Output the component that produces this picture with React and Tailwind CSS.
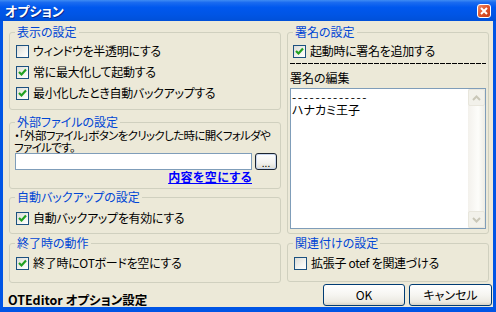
import React from "react";

function CB({ checked }) {
  return (
    <span className="w-[13px] h-[13px] border border-[#1c5180] bg-[linear-gradient(135deg,#dcdcd7_0%,#f4f4f0_60%,#ffffff_100%)] flex items-center justify-center shrink-0">
      {checked && (
        <svg width="11" height="11" viewBox="0 0 11 11">
          <path d="M2 5 L4.5 7.5 L9 2.5" stroke="#21a121" strokeWidth="2.2" fill="none" />
        </svg>
      )}
    </span>
  );
}

function Row({ checked, children, className = "" }) {
  return (
    <div className={"flex items-center gap-[4px] " + className}>
      <CB checked={checked} />
      <span className="leading-[14px] whitespace-nowrap tracking-[-0.3px]">{children}</span>
    </div>
  );
}

function Group({ title, className = "", children }) {
  return (
    <fieldset className={"border border-[#d0d0bf] rounded-[3px] " + className}>
      <legend className="ml-[5px] px-[2px] text-[#0046d5] leading-[14px]">{title}</legend>
      {children}
    </fieldset>
  );
}

function XPButton({ children, className = "" }) {
  return (
    <div
      className={
        "h-[22px] border border-[#003c74] rounded-[3px] bg-[linear-gradient(180deg,#ffffff_0%,#f6f5f1_50%,#ebe9e1_85%,#d8d3c6_100%)] flex items-center justify-center leading-[14px] " +
        className
      }
    >
      {children}
    </div>
  );
}

export default function App() {
  return (
    <div className="w-[496px] h-[312px] bg-[#0055e5] flex flex-col overflow-hidden text-[12px] text-black font-['Noto_Sans_CJK_JP',sans-serif] [font-feature-settings:'palt']">
      {/* title bar */}
      <div className="h-[21px] shrink-0 flex items-center justify-between pl-[5px] pr-[5px] bg-[linear-gradient(180deg,#3f8cf3_0%,#1a6bf0_12%,#0058ee_35%,#0055e5_70%,#0050d8_100%)]">
        <span className="text-white font-bold text-[13px] leading-[16px] pt-[1px] [text-shadow:1px_1px_0_#0a2a8a]">
          オプション
        </span>
        <div className="w-[14px] h-[14px] mt-[1px] rounded-[3px] border border-white bg-[linear-gradient(135deg,#f08a66_0%,#e0542a_50%,#c43c18_100%)] flex items-center justify-center">
          <svg width="8" height="8" viewBox="0 0 8 8">
            <path d="M1 1 L7 7 M7 1 L1 7" stroke="#fff" strokeWidth="2" />
          </svg>
        </div>
      </div>

      {/* body */}
      <div className="flex-1 ml-[3px] mr-[3px] mb-[5px] bg-[#ece9d8] pt-[4px] pl-[6px] pr-[1px] flex gap-[6px]">
        {/* left column */}
        <div className="w-[272px] flex flex-col">
          <Group title="表示の設定" className="h-[85px]">
            <div className="flex flex-col gap-[1px] mt-[2px] pl-[6px]">
              <Row checked={false} className="h-[20px]">ウィンドウを半透明にする</Row>
              <Row checked className="h-[20px]">常に最大化して起動する</Row>
              <Row checked className="h-[20px]">最小化したとき自動バックアップする</Row>
            </div>
          </Group>

          <Group title="外部ファイルの設定" className="h-[74px] mt-[5px]">
            <div className="pl-[4px] text-[11.5px] leading-[12px] tracking-[-0.65px] whitespace-nowrap">
              <div>・「外部ファイル」ボタンをクリックした時に開くフォルダや</div>
              <div>ファイルです。</div>
            </div>
            <div className="flex items-center gap-[3px] pl-[5px] h-[17px]">
              <div className="w-[237px] h-[17px] border border-[#7f9db9] bg-white" />
              <div className="w-[22px] h-[17px] rounded-[3px] border border-[#1b2430] bg-[linear-gradient(180deg,#ffffff_0%,#f3f2ee_60%,#dedbd0_100%)] shadow-[inset_0_0_0_1px_#c8d6ee] flex items-end justify-center text-[10px] leading-[12px]">
                ...
              </div>
            </div>
            <div className="mt-[1px] flex justify-end pr-[28px]">
              <span className="leading-[12px] font-bold text-[#0000ff] underline tracking-[0.4px]">内容を空にする</span>
            </div>
          </Group>

          <Group title="自動バックアップの設定" className="h-[44px] mt-[1px]">
            <Row checked className="h-[20px] mt-[4px] pl-[6px]">自動バックアップを有効にする</Row>
          </Group>

          <Group title="終了時の動作" className="h-[47px] mt-[2px]">
            <Row checked className="h-[20px] mt-[3px] pl-[6px]">終了時にOTボードを空にする</Row>
          </Group>

          <div className="mt-[10px] -ml-[1px] text-[12.5px] leading-[14px] font-bold whitespace-nowrap">
            OTEditor オプション設定
          </div>
        </div>

        {/* right column */}
        <div className="w-[205px] flex flex-col">
          <Group title="署名の設定" className="h-[209px] mr-[3px]">
            <Row checked className="h-[18px] mt-[3px] pl-[5px]">起動時に署名を追加する</Row>
            <div className="mt-[3px] ml-[2px] w-[196px] h-px bg-[repeating-linear-gradient(90deg,#000_0px,#000_5px,transparent_5px,transparent_6px)]" />
            <div className="mt-[8px] ml-[2px] leading-[12px]">署名の編集</div>
            <div className="mt-[4px] ml-[2px] w-[196px] h-[141px] border border-[#7f9db9] bg-white flex">
              <div className="flex-1 pl-[1px] pt-[1px] leading-[13px]">
                <div className="tracking-[1.7px]">-------------</div>
                <div>ハナカミ王子</div>
              </div>
              <div className="w-[17px] flex flex-col justify-between bg-[linear-gradient(90deg,#f3f1ec_0%,#fdfdfa_60%,#eeede5_100%)]">
                <div className="w-[17px] h-[17px] rounded-[2px] border border-[#e8e6dc] bg-[#f2f1ea] flex items-center justify-center">
                  <svg width="9" height="6" viewBox="0 0 9 6">
                    <path d="M1 5 L4.5 1.5 L8 5" stroke="#c9c7b8" strokeWidth="2" fill="none" />
                  </svg>
                </div>
                <div className="w-[17px] h-[17px] rounded-[2px] border border-[#e8e6dc] bg-[#f2f1ea] flex items-center justify-center">
                  <svg width="9" height="6" viewBox="0 0 9 6">
                    <path d="M1 1 L4.5 4.5 L8 1" stroke="#c9c7b8" strokeWidth="2" fill="none" />
                  </svg>
                </div>
              </div>
            </div>
          </Group>

          <Group title="関連付けの設定" className="h-[46px] mt-[2px] mr-[3px]">
            <Row checked={false} className="h-[20px] mt-[3px] pl-[6px]">拡張子 otef を関連づける</Row>
          </Group>

          <div className="mt-[2px] flex justify-end gap-[4px]">
            <XPButton className="w-[82px]">OK</XPButton>
            <XPButton className="w-[83px]">キャンセル</XPButton>
          </div>
        </div>
      </div>
    </div>
  );
}
